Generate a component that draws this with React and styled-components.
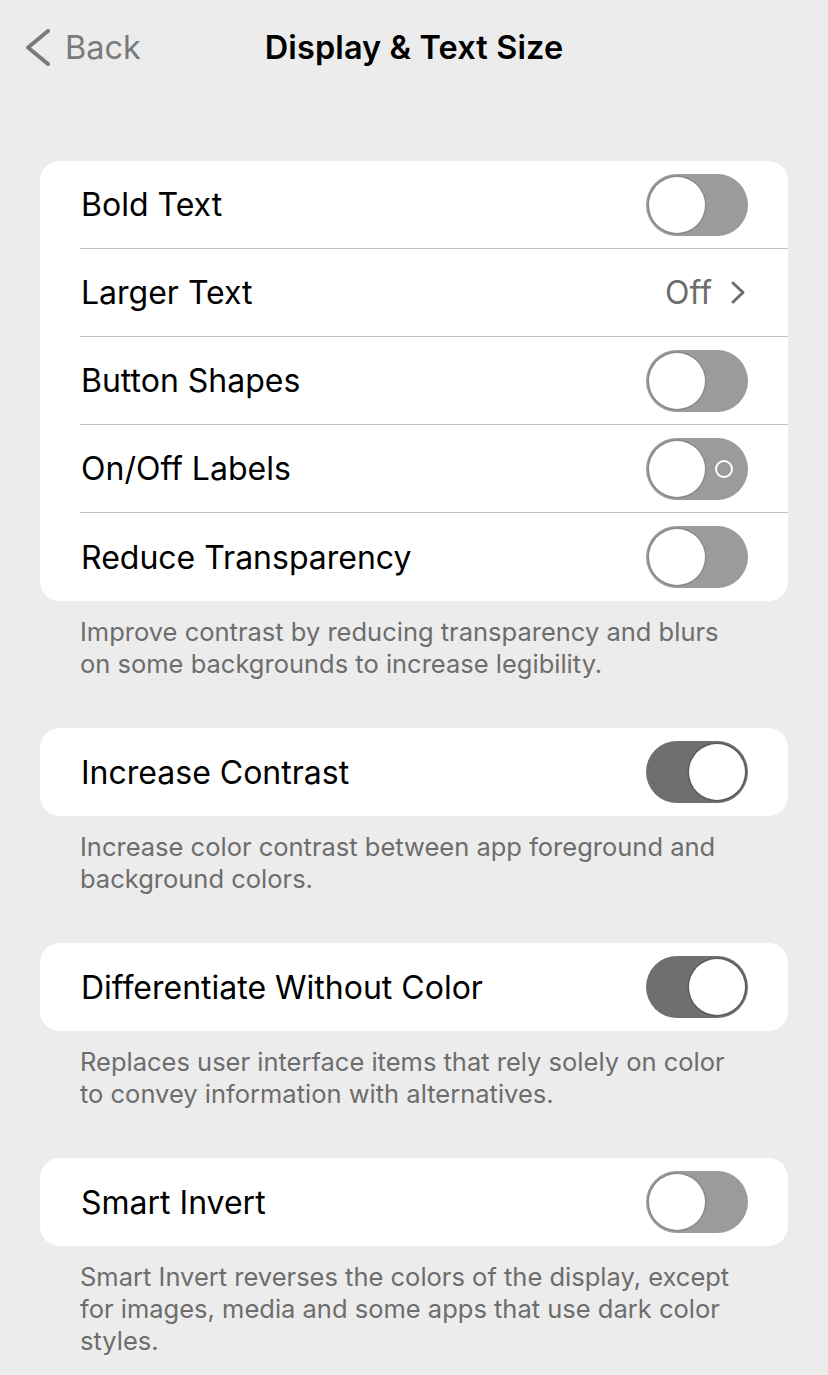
import React from "react";
import styled, { createGlobalStyle } from "styled-components";

const GlobalStyle = createGlobalStyle`
  html, body {
    margin: 0;
    padding: 0;
    background: #ececec;
    font-family: Inter, "Noto Sans", "Liberation Sans", sans-serif;
    -webkit-font-smoothing: antialiased;
  }
`;

const Page = styled.div`
  width: 828px;
  min-height: 1375px;
  background: #ececec;
`;

const NavBar = styled.div`
  position: relative;
  height: 94px;
  display: flex;
  align-items: center;
  justify-content: center;
`;

const BackButton = styled.div`
  position: absolute;
  left: 26px;
  top: 28px;
  display: flex;
  align-items: center;
  gap: 15px;
  color: #7a7a7a;
  font-size: 32.5px;
`;

const Title = styled.div`
  font-size: 32.5px;
  font-weight: 600;
  color: #000;
  letter-spacing: 0.1px;
`;

const Content = styled.div`
  padding: 67px 40px 0;
`;

const Card = styled.div`
  background: #fff;
  border-radius: 20px;
  padding-left: 40px;
  overflow: hidden;
`;

const Row = styled.div`
  height: 88px;
  display: flex;
  align-items: center;
  justify-content: space-between;
  padding-right: 40px;
  border-bottom: ${(p) => (p.$last ? "none" : "1.5px solid #c2c2c2")};
  box-sizing: border-box;
`;

const Label = styled.div`
  font-size: 32px;
  color: #000;
  padding-left: 1px;
`;

const Value = styled.div`
  display: flex;
  align-items: center;
  gap: 19px;
  color: #6d6d6d;
  font-size: 32px;
  padding-right: 3px;
`;

const Footnote = styled.div`
  padding: 15px 48px 48px 40px;
  font-size: 25.5px;
  line-height: 32px;
  color: #6d6d6d;
`;

const Track = styled.div`
  position: relative;
  width: 102px;
  height: 62px;
  border-radius: 31px;
  background: ${(p) => (p.$on ? "#6f6f6f" : "#9b9b9b")};
  flex-shrink: 0;
`;

const Knob = styled.div`
  position: absolute;
  top: 3px;
  left: ${(p) => (p.$on ? "43px" : "3px")};
  width: 56px;
  height: 56px;
  border-radius: 50%;
  background: #fff;
  box-shadow: 0 0 0 1.5px ${(p) => (p.$on ? "#5c5c5c" : "#8a8a8a")};
`;

const OffMark = styled.div`
  position: absolute;
  top: 22px;
  right: 15px;
  width: 14px;
  height: 14px;
  border-radius: 50%;
  border: 2.5px solid #fff;
`;

const Toggle = ({ on, labels }) => (
  <Track $on={on}>
    {labels && !on && <OffMark />}
    <Knob $on={on} />
  </Track>
);

const Chevron = ({ w = 13, h = 22, color = "#6d6d6d", dir = "right", stroke = 3 }) => (
  <svg width={w} height={h} viewBox={`0 0 ${w} ${h}`} fill="none">
    <path
      d={
        dir === "right"
          ? `M2 2 L${w - 2} ${h / 2} L2 ${h - 2}`
          : `M${w - 2} 2 L2 ${h / 2} L${w - 2} ${h - 2}`
      }
      stroke={color}
      strokeWidth={stroke}
      strokeLinecap="round"
      strokeLinejoin="round"
    />
  </svg>
);

const groups = [
  {
    rows: [
      { label: "Bold Text", type: "toggle", on: false },
      { label: "Larger Text", type: "value", value: "Off" },
      { label: "Button Shapes", type: "toggle", on: false },
      { label: "On/Off Labels", type: "toggle", on: false, labels: true },
      { label: "Reduce Transparency", type: "toggle", on: false },
    ],
    note: "Improve contrast by reducing transparency and blurs on some backgrounds to increase legibility.",
  },
  {
    rows: [{ label: "Increase Contrast", type: "toggle", on: true }],
    note: "Increase color contrast between app foreground and background colors.",
  },
  {
    rows: [{ label: "Differentiate Without Color", type: "toggle", on: true }],
    note: "Replaces user interface items that rely solely on color to convey information with alternatives.",
  },
  {
    rows: [{ label: "Smart Invert", type: "toggle", on: false }],
    note: "Smart Invert reverses the colors of the display, except for images, media and some apps that use dark color styles.",
  },
];

export default function App() {
  return (
    <Page>
      <GlobalStyle />
      <NavBar>
        <BackButton>
          <Chevron w={24} h={37} dir="left" color="#7a7a7a" stroke={4} />
          Back
        </BackButton>
        <Title>Display &amp; Text Size</Title>
      </NavBar>
      <Content>
        {groups.map((g, i) => (
          <div key={i}>
            <Card>
              {g.rows.map((r, j) => (
                <Row key={r.label} $last={j === g.rows.length - 1}>
                  <Label>{r.label}</Label>
                  {r.type === "toggle" ? (
                    <Toggle on={r.on} labels={r.labels} />
                  ) : (
                    <Value>
                      {r.value}
                      <Chevron w={14} h={23} />
                    </Value>
                  )}
                </Row>
              ))}
            </Card>
            <Footnote>{g.note}</Footnote>
          </div>
        ))}
      </Content>
    </Page>
  );
}
